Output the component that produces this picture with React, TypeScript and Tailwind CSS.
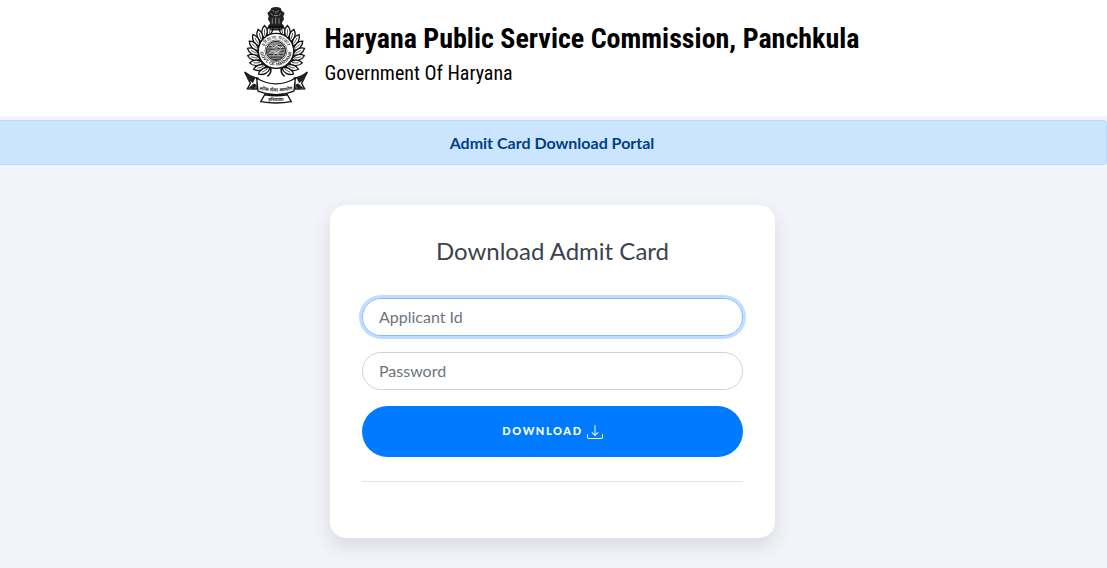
const leafAngles = [24, 39, 54, 69, 84, 99, 114, 129, 144, 158];

function Wreath() {
  return (
    <g fill="#fff" stroke="#111" strokeWidth="4">
      {leafAngles.map((angle) => (
        <g key={angle} transform={`rotate(${angle} 120 155)`}>
          <path d="M122 103 C104 99 95 86 97 72 C113 74 124 87 122 103Z" />
          <path d="M122 104 C130 96 130 84 124 76" fill="none" strokeWidth="5" />
          <path d="M116 97 C112 90 108 85 104 81" fill="none" strokeWidth="2" />
        </g>
      ))}
    </g>
  );
}

function Emblem() {
  return (
    <svg
      viewBox="24 20 192 294"
      className="h-[97px] w-16 shrink-0"
      role="img"
      aria-label="Haryana emblem"
      preserveAspectRatio="none"
    >
      <Wreath />
      <g transform="translate(240 0) scale(-1 1)">
        <Wreath />
      </g>

      {/* seal */}
      <circle cx="120" cy="153" r="53" fill="#fff" stroke="#111" strokeWidth="4" />
      <circle cx="120" cy="153" r="33" fill="#fff" stroke="#333" strokeWidth="2" />
      <circle cx="120" cy="153" r="29" fill="#8a8a8a" stroke="#222" strokeWidth="3" />
      <path
        d="M99 140h16M123 137h17M95 148h21M124 146h22M94 156h15M129 154h16M97 164h44M102 172h36M109 179h22"
        stroke="#333"
        strokeWidth="3"
      />
      <path
        d="M103 134l10 10 9-8 12 9 6-5M100 159l12-7 9 7 13-8M112 167l8-10 9 11"
        fill="none"
        stroke="#ddd"
        strokeWidth="3"
      />
      <path id="seal-top" d="M82 155a38 38 0 0 1 76 0" fill="none" />
      <path id="seal-bottom" d="M72 150a48 48 0 0 0 96 0" fill="none" />
      <text className="font-['Noto_Sans',sans-serif] text-[15px]" fill="#222">
        <textPath href="#seal-top" startOffset="50%" textAnchor="middle">
          हरियाणा सरकार
        </textPath>
      </text>
      <text className="font-['Liberation_Sans',sans-serif] text-[14px] font-bold" fill="#222">
        <textPath href="#seal-bottom" startOffset="50%" textAnchor="middle">
          GOVT. OF HARYANA
        </textPath>
      </text>

      {/* lion capital */}
      <path
        d="M106 23q14-6 28 0l3 8 9 7-4 10 2 10-6 9 1 11h-38l1-11-6-9 2-10-4-10 9-8Z"
        fill="#222"
      />
      <path
        d="M111 30l3 5M127 30l-3 5M120 33v7M105 39l5 7M134 39l-5 7M114 46h12M109 54v17M119 51v20M129 54v17"
        stroke="#bbb"
        strokeWidth="2"
      />
      <path d="M97 77h46v9h-46Z" fill="#111" />
      <path d="M103 89h34" stroke="#111" strokeWidth="4" />

      {/* ribbon */}
      <path
        d="M26 217q18 16 40 19l-4 33-28-1 9-17Z M214 217q-18 16-40 19l4 33 28-1-9-17Z"
        fill="#fff"
        stroke="#111"
        strokeWidth="4"
      />
      <path
        d="M28 219q14 12 30 16l-7 15-15-9Z M212 219q-14 12-30 16l7 15 15-9Z M36 267l17-15 8 3-3 14Z M204 267l-17-15-8 3 3 14Z"
        fill="#222"
      />
      <path
        d="M62 236q58 34 116 0l-4 39q-54 22-108 0Z"
        fill="#fff"
        stroke="#111"
        strokeWidth="4"
      />
      <path id="ribbon-line" d="M60 268q60 16 120 0" fill="none" />
      <text className="font-['Noto_Sans',sans-serif] text-[15px] font-bold" fill="#222">
        <textPath href="#ribbon-line" startOffset="50%" textAnchor="middle">
          लोक सेवा आयोग
        </textPath>
      </text>
      <path
        d="M86 286q34 6 68 0l12 21q-46 8-92 0Z"
        fill="#fff"
        stroke="#111"
        strokeWidth="4"
      />
      <text
        x="120"
        y="304"
        textAnchor="middle"
        className="font-['Noto_Sans',sans-serif] text-[14px] font-bold"
        fill="#222"
      >
        हरियाणा
      </text>
    </svg>
  );
}

function DownloadIcon() {
  return (
    <svg viewBox="0 0 16 16" className="size-4" fill="currentColor" aria-hidden="true">
      <path d="M.5 9.9a.5.5 0 0 1 .5.5v2.5a1 1 0 0 0 1 1h12a1 1 0 0 0 1-1v-2.5a.5.5 0 0 1 1 0v2.5a2 2 0 0 1-2 2H2a2 2 0 0 1-2-2v-2.5a.5.5 0 0 1 .5-.5z" />
      <path d="M7.646 11.854a.5.5 0 0 0 .708 0l3-3a.5.5 0 0 0-.708-.708L8.500 10.293V1.500a.5.5 0 0 0-1 0v8.793L5.354 8.146a.5.5 0 1 0-.708.708l3 3z" />
    </svg>
  );
}

export default function App() {
  return (
    <div className="min-h-screen bg-[#f3f4fa] font-['Lato',sans-serif] text-base text-[#3a4350]">
      <header className="flex justify-center gap-[17px] bg-white pt-[7px] pb-3 pr-1 text-black font-['Roboto_Condensed','Liberation_Sans_Narrow',Roboto,sans-serif]">
        <Emblem />
        <div className="pt-4">
          <h1 className="text-[28px] leading-8 font-bold">
            Haryana Public Service Commission, Panchkula
          </h1>
          <p className="pt-0.5 text-xl leading-8">Government Of Haryana</p>
        </div>
      </header>

      <div className="mt-1 flex h-[45px] items-center justify-center rounded-r border border-l-0 border-[#b8daff] bg-[#cce5ff] pr-0.5 leading-6 font-bold text-[#004085]">
        Admit Card Download Portal
      </div>

      <main className="flex justify-center pt-10 pr-0.5 pb-[30px]">
        <form
          className="w-full max-w-[445px] rounded-2xl bg-white px-8 pt-8 pb-14 shadow-[0_8px_20px_rgba(0,0,0,0.11)]"
          onSubmit={(e) => e.preventDefault()}
        >
          <h2 className="mb-[33px] text-center text-2xl leading-7">Download Admit Card</h2>
          <div className="flex flex-col gap-4">
            <input
              type="text"
              aria-label="Applicant Id"
              placeholder="Applicant Id"
              className="h-[38px] w-full rounded-full border border-[#80bdff] px-4 pb-0.5 ring-3 ring-[#bfdeff] outline-none placeholder:text-[#6c757d]"
            />
            <input
              type="password"
              aria-label="Password"
              placeholder="Password"
              className="h-[38px] w-full rounded-full border border-[#ced4da] px-4 pb-0.5 outline-none placeholder:text-[#6c757d] focus:border-[#80bdff]"
            />
            <button
              type="submit"
              className="flex h-[51px] w-full items-center justify-center gap-1 rounded-full bg-[#007bff] text-[11px] font-black tracking-[0.1rem] text-white"
            >
              DOWNLOAD
              <DownloadIcon />
            </button>
          </div>
          <hr className="mt-6 border-black/10" />
        </form>
      </main>
    </div>
  );
}
